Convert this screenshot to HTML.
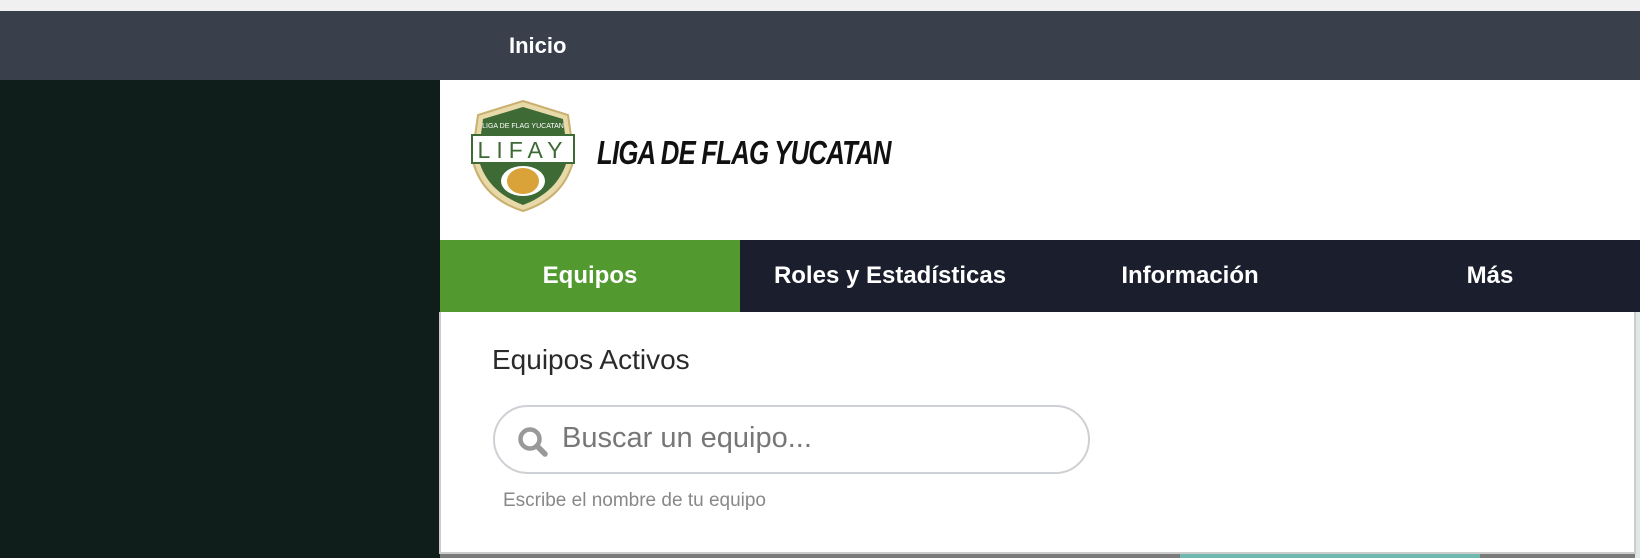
<!DOCTYPE html>
<html><head><meta charset="utf-8"><style>
*{margin:0;padding:0;box-sizing:border-box}
body{width:1640px;height:558px;overflow:hidden;background:#f0f0f0;font-family:"Liberation Sans",sans-serif;position:relative}
div{position:absolute}
.nav span{position:absolute;top:0;line-height:72px;color:#fff;font-weight:bold;font-size:24px;transform:translateX(-50%);white-space:nowrap}
</style></head><body>
<div style="left:0;top:11px;width:1640px;height:69px;background:#3a3f4c"></div>
<div style="left:509px;top:33px;color:#fff;font-size:22px;font-weight:bold">Inicio</div>
<div style="left:0;top:80px;width:440px;height:478px;background:#0f1d1b"></div>
<div style="left:440px;top:80px;width:1200px;height:160px;background:#fff"></div>
<svg style="position:absolute;left:468px;top:99px" width="110" height="114" viewBox="0 0 110 114">
<path d="M55 2 L100 16 L106 58 C100 88 80 104 55 112 C30 104 10 88 4 58 L10 16 Z" fill="#e8d9a8" stroke="#c9b070" stroke-width="2"/>
<path d="M55 8 L95 20 L100 58 C94 84 76 98 55 106 C34 98 16 84 10 58 L15 20 Z" fill="#3e6b35"/>
<rect x="4" y="36" width="102" height="28" fill="#fff" stroke="#3e6b35" stroke-width="2"/>
<text x="55" y="59" font-family="Liberation Sans" font-size="23" fill="#3e6b35" text-anchor="middle" letter-spacing="6">LIFAY</text>
<text x="55" y="29" font-family="Liberation Sans" font-size="7" fill="#fff" text-anchor="middle">LIGA DE FLAG YUCATAN</text>
<ellipse cx="55" cy="82" rx="22" ry="15" fill="#fff"/>
<ellipse cx="55" cy="82" rx="16" ry="13" fill="#d9a33a"/>
</svg>
<div style="left:597px;top:134px;font-size:33px;font-weight:bold;font-style:italic;color:#111;transform:scaleX(0.78);transform-origin:left;letter-spacing:-1px;white-space:nowrap">LIGA DE FLAG YUCATAN</div>
<div class="nav" style="left:440px;top:240px;width:1200px;height:72px;background:#1b1e2c">
<div style="left:0;top:0;width:300px;height:72px;background:#529a30"></div>
<span style="left:150px">Equipos</span>
<span style="left:450px">Roles y Estadísticas</span>
<span style="left:750px">Información</span>
<span style="left:1050px">Más</span>
</div>
<div style="left:440px;top:553px;width:1200px;height:5px;background:#7a7a7a"></div>
<div style="left:1180px;top:553px;width:300px;height:5px;background:#6fb8b0"></div>
<div style="left:1635px;top:312px;width:5px;height:246px;background:#e0e8e6"></div>
<div style="left:439px;top:312px;width:1197px;height:242px;background:#fff;border:2px solid #ccc;border-top:none"></div>
<div style="left:492px;top:344px;font-size:28px;color:#2a2a2a">Equipos Activos</div>
<div style="left:493px;top:405px;width:597px;height:69px;border:2px solid #cdd0d4;border-radius:35px"></div>
<svg style="position:absolute;left:517px;top:426px" width="32" height="32" viewBox="0 0 32 32"><circle cx="13" cy="13" r="9.5" fill="none" stroke="#999" stroke-width="4.5"/><path d="M20 20 L28 28" stroke="#999" stroke-width="5.5" stroke-linecap="round"/></svg>
<div style="left:562px;top:422px;font-size:29px;color:#777">Buscar un equipo...</div>
<div style="left:503px;top:490px;font-size:19px;color:#888">Escribe el nombre de tu equipo</div>
</body></html>
